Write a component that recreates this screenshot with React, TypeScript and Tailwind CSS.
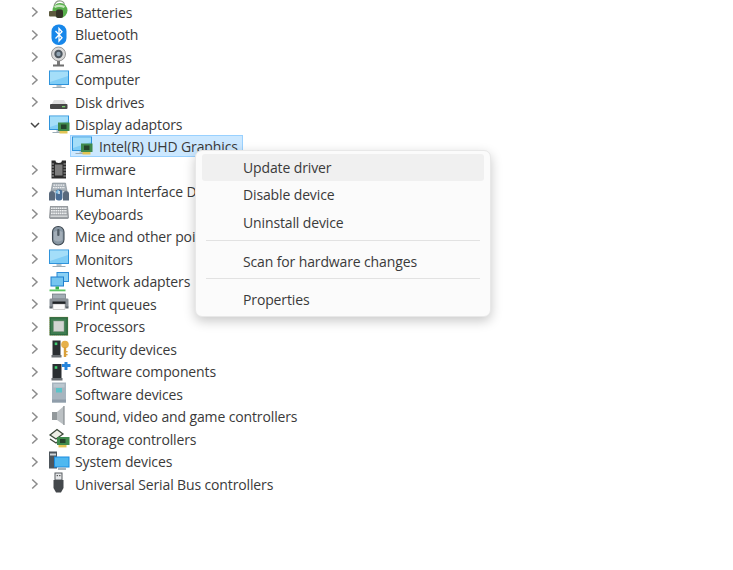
import React from "react";

function Chevron({ open }: { open?: boolean }) {
  return (
    <svg width="12" height="12" viewBox="0 0 12 12" fill="none" strokeWidth="1.5">
      {open ? <path d="M2 4 L6 8 L10 4" stroke="#454545" /> : <path d="M3.2 1.5 L8 6 L3.2 10.5" stroke="#8c8c8c" />}
    </svg>
  );
}

function Monitor() {
  return (
    <g>
      <rect x="0" y="0.5" width="20" height="14.5" fill="#2f94dc" />
      <rect x="1" y="1.5" width="18" height="12.5" fill="#7fcdf6" />
      <path d="M1 1.5 H19 V6 L1 12 Z" fill="#a4def9" />
      <rect x="7.5" y="15" width="5" height="2" fill="#b7c2c9" />
      <rect x="3.5" y="17" width="13" height="1" fill="#9cadb8" />
    </g>
  );
}

function Card() {
  return (
    <g>
      <rect x="9" y="7.5" width="11.5" height="8.5" fill="#3f8a4c" />
      <rect x="12" y="9.5" width="5.5" height="4.5" fill="#24432b" />
      <rect x="10.5" y="16" width="8" height="2.5" fill="#e2c454" />
    </g>
  );
}

function Icon({ name }: { name: string }) {
  let c: React.ReactNode = null;
  switch (name) {
    case "battery":
      c = (<g>
        <path d="M5 5 Q6 -2 12 -1 Q16 0 15 4" fill="none" stroke="#8f9a8a" strokeWidth="1.2" />
        <circle cx="11" cy="8.5" r="7.5" fill="#58b04c" />
        <path d="M5 4 Q10 1 16 4 L15 6 Q10 4 6 6 Z" fill="#c6e6bd" />
        <rect x="0" y="9" width="8" height="5.5" rx="1" fill="#5c5a3e" />
        <rect x="7" y="7.5" width="7" height="8.5" rx="2" fill="#343428" />
      </g>);
      break;
    case "bluetooth":
      c = (<g>
        <rect x="2.5" y="-0.5" width="15" height="20.5" rx="7" fill="#1787ea" />
        <path d="M6.5 6 L13 12.8 L10 16 V3.5 L13 6.8 L6.5 13.5" fill="none" stroke="#fff" strokeWidth="1.3" />
      </g>);
      break;
    case "camera":
      c = (<g>
        <circle cx="9.5" cy="7" r="7" fill="#d8d8d8" stroke="#808080" strokeWidth="0.8" />
        <circle cx="9.5" cy="7" r="4.2" fill="#4c565f" />
        <circle cx="9.5" cy="7" r="2.2" fill="#8fa2b1" />
        <rect x="8" y="14" width="3" height="4" fill="#7a7a7a" />
        <rect x="4" y="17.5" width="11" height="2" fill="#6f6f6f" />
      </g>);
      break;
    case "computer":
    case "monitor":
      c = <Monitor />;
      break;
    case "disk":
      c = (<g>
        <path d="M2.5 12.5 L5 8 H15 L17.5 12.5 Z" fill="#dfdfdf" />
        <rect x="1" y="12" width="17.5" height="5" rx="1" fill="#464646" />
        <rect x="13" y="14" width="3.2" height="1.3" fill="#7bd06e" />
      </g>);
      break;
    case "display":
      c = (<g><Monitor /><Card /></g>);
      break;
    case "firmware":
      c = (<g>
        <path d="M2.5 0.5 H6.5 A3.2 2.5 0 0 0 12.9 0.5 H17 V18.5 H2.5 Z" fill="#2c2c2c" />
        <rect x="6" y="4.5" width="7.5" height="11" fill="#7d7d7d" />
        <path d="M2.5 4 H5 M2.5 7 H5 M2.5 10 H5 M2.5 13 H5 M2.5 16 H5 M14.5 4 H17 M14.5 7 H17 M14.5 10 H17 M14.5 13 H17 M14.5 16 H17" stroke="#c4c4c4" strokeWidth="0.8" />
      </g>);
      break;
    case "hid":
      c = (<g>
        <path d="M3.5 1 H16.5 L18 9 H2 Z" fill="#a8b0b7" stroke="#737d85" strokeWidth="0.5" />
        <path d="M4.5 3.2 H15.5 M4 5.6 H16" stroke="#f0f2f3" strokeWidth="1.2" strokeDasharray="1.6 0.7" />
        <path d="M0 18.5 V12 Q0 9 3 9 Q6 9 6 12 V18.5 Z" fill="#59697c" />
        <path d="M14 18.5 V12 Q14 9 17 9 Q20 9 20 12 V18.5 Z" fill="#59697c" />
        <rect x="6.5" y="7.5" width="7" height="11" rx="3.2" fill="#4a6e96" />
        <path d="M6.5 11 Q8 7 10 8 V12 Z" fill="#7fbde4" />
        <rect x="9.4" y="9" width="1.4" height="3" fill="#dbe3ea" />
      </g>);
      break;
    case "keyboard":
      c = (<g>
        <path d="M1 2 H19 L20 13.5 L19 15 H1 L0 13.5 Z" fill="#989ca0" />
        <path d="M2 4.2 H18 M2 6.8 H18 M2 9.4 H18" stroke="#eef0f1" strokeWidth="1.6" strokeDasharray="1.7 0.5" />
        <rect x="1.5" y="11.5" width="17" height="1.3" fill="#dfe1e3" />
      </g>);
      break;
    case "mouse":
      c = (<g>
        <rect x="3.5" y="-0.5" width="11.5" height="18.5" rx="5.5" fill="#8796a3" stroke="#3f4952" strokeWidth="1.1" />
        <path d="M5 5 Q9 2 13.5 5 V13 Q9 16 5 13 Z" fill="#a3aeb8" />
        <rect x="8.2" y="2" width="2.3" height="7" rx="1" fill="#515c66" />
      </g>);
      break;
    case "network":
      c = (<g>
        <rect x="7.5" y="0" width="12.5" height="10" fill="#2d8bd6" />
        <rect x="8.5" y="1" width="10.5" height="8" fill="#8ad0f4" />
        <rect x="1.5" y="4.5" width="13.5" height="10" fill="#1f7fce" />
        <rect x="2.5" y="5.5" width="11.5" height="8" fill="#75c5f0" />
        <rect x="6.5" y="14.5" width="3.5" height="3" fill="#35b04c" />
        <rect x="0.5" y="17.5" width="16" height="1.8" fill="#5cc565" />
      </g>);
      break;
    case "print":
      c = (<g>
        <rect x="3.5" y="0" width="13" height="5" fill="#a3aeb5" stroke="#59626a" strokeWidth="0.6" />
        <rect x="0.5" y="4.5" width="19" height="9" rx="1.2" fill="#8a9197" />
        <rect x="3.5" y="7.5" width="13" height="2.5" fill="#1f2326" />
        <rect x="4" y="10" width="12" height="5.5" fill="#fbfbfb" stroke="#888" strokeWidth="0.4" />
        <rect x="0.5" y="12.5" width="3" height="2" fill="#5a6268" />
        <rect x="16.5" y="12.5" width="3" height="2" fill="#5a6268" />
      </g>);
      break;
    case "cpu":
      c = (<g>
        <rect x="0.5" y="0" width="18.5" height="18.5" fill="#2d6a42" stroke="#a89b4e" strokeWidth="0.5" strokeDasharray="1 1" />
        <rect x="2" y="1.5" width="15.5" height="15.5" fill="#3f7d50" />
        <rect x="4.5" y="4" width="10.5" height="10.5" fill="#d3d5d2" stroke="#8b9a8c" strokeWidth="0.5" />
      </g>);
      break;
    case "security":
      c = (<g>
        <rect x="3.5" y="1.5" width="8" height="14.5" fill="#2b2f32" />
        <rect x="5.7" y="3.5" width="2.6" height="2.6" fill="#3fcf72" />
        <rect x="2.5" y="16" width="10" height="2.5" fill="#6a6f73" />
        <circle cx="16" cy="5.5" r="3.8" fill="#e6b04a" />
        <rect x="14.8" y="8" width="2.4" height="10" fill="#d9a03a" />
        <rect x="17" y="12" width="1.6" height="1.3" fill="#d9a03a" />
        <rect x="17" y="15" width="1.6" height="1.3" fill="#d9a03a" />
      </g>);
      break;
    case "softcomp":
      c = (<g>
        <rect x="3.5" y="2" width="9" height="14" fill="#2b2f32" />
        <rect x="5.7" y="4.2" width="2.6" height="2.6" fill="#3fcf72" />
        <rect x="2.5" y="16" width="11" height="2.5" fill="#6a6f73" />
        <path d="M13 3.5 H21.5 M17 0 V8" stroke="#2685dc" strokeWidth="3" fill="none" />
      </g>);
      break;
    case "softdev":
      c = (<g>
        <rect x="3" y="-1.5" width="14" height="20" fill="#a8b5bf" />
        <rect x="4.5" y="0" width="11" height="3.5" fill="#bcc8d0" />
        <rect x="7" y="4" width="6" height="4.5" fill="#5cc4c9" />
        <rect x="3" y="15.5" width="14" height="3" fill="#8f9daa" />
      </g>);
      break;
    case "sound":
      c = (<g>
        <rect x="3" y="5" width="5" height="8" fill="#92989b" />
        <path d="M8 5 L15 -1 V18 L8 13 Z" fill="#bcc1c4" />
        <path d="M15 -1 V18" stroke="#868c90" strokeWidth="1.2" />
      </g>);
      break;
    case "storage":
      c = (<g>
        <path d="M1 6 L8 0.5 L14 5 L7 10 Z" fill="#efefe6" stroke="#3e4a3b" strokeWidth="1.3" />
        <path d="M1 10 L7 14 L11 11" fill="none" stroke="#3e4a3b" strokeWidth="1.4" />
        <rect x="8" y="8" width="12.5" height="8" fill="#3f8a4c" />
        <rect x="11" y="10" width="5.5" height="4" fill="#24432b" />
        <rect x="9.5" y="16" width="8" height="2.4" fill="#e2c454" />
      </g>);
      break;
    case "system":
      c = (<g>
        <rect x="0" y="-0.5" width="8" height="17" fill="#4d555b" />
        <rect x="1" y="1.5" width="6" height="2" fill="#d2d6d9" />
        <rect x="5" y="4.5" width="15.5" height="11" fill="#1a8ce0" />
        <rect x="6" y="5.5" width="13.5" height="9" fill="#4fb8f0" />
        <rect x="9" y="15.5" width="8" height="2.5" fill="#a8b4bc" />
      </g>);
      break;
    case "usb":
      c = (<g>
        <rect x="6" y="-1" width="7" height="7" fill="#e4e6e8" stroke="#565b5f" strokeWidth="1" />
        <rect x="7.7" y="1" width="1.2" height="1.2" fill="#444" />
        <rect x="10.2" y="1" width="1.2" height="1.2" fill="#444" />
        <path d="M4.5 6 H14.5 V14 L12 18.5 H7 L4.5 14 Z" fill="#44484c" />
      </g>);
      break;
  }
  return (
    <svg width="20" height="20" viewBox="0 0 20 20" className="shrink-0 overflow-visible">
      {c}
    </svg>
  );
}

const rows: [string, string, boolean?][] = [
  ["Batteries", "battery"],
  ["Bluetooth", "bluetooth"],
  ["Cameras", "camera"],
  ["Computer", "computer"],
  ["Disk drives", "disk"],
  ["Display adaptors", "display", true],
];
const rows2: [string, string][] = [
  ["Firmware", "firmware"],
  ["Human Interface Devices", "hid"],
  ["Keyboards", "keyboard"],
  ["Mice and other pointing devices", "mouse"],
  ["Monitors", "monitor"],
  ["Network adapters", "network"],
  ["Print queues", "print"],
  ["Processors", "cpu"],
  ["Security devices", "security"],
  ["Software components", "softcomp"],
  ["Software devices", "softdev"],
  ["Sound, video and game controllers", "sound"],
  ["Storage controllers", "storage"],
  ["System devices", "system"],
  ["Universal Serial Bus controllers", "usb"],
];

function Row({ label, icon, open }: { label: string; icon: string; open?: boolean }) {
  return (
    <div className="flex items-center h-[22.48px] whitespace-nowrap">
      <span className="w-[12px] ml-[29px] mr-[8px] flex justify-center shrink-0"><Chevron open={open} /></span>
      <Icon name={icon} />
      <span className="ml-[6px]">{label}</span>
    </div>
  );
}

function Item({ label, active }: { label: string; active?: boolean }) {
  return (
    <div className={`h-[27.5px] mx-[6px] pl-[41px] flex items-center rounded-[3px] ${active ? "bg-[#f0f0f0]" : ""}`}>
      {label}
    </div>
  );
}

export default function App() {
  return (
    <div className="relative w-[733px] h-[570px] bg-white overflow-hidden font-['Open_Sans','Noto_Sans',sans-serif] text-[14px] tracking-[-0.13px] text-[#3a3a3a]">
      <div className="pt-[1px]">
        {rows.map(([l, i, o]) => <Row key={l} label={l} icon={i} open={o} />)}
        <div className="flex items-center h-[22.48px] whitespace-nowrap">
          <div className="ml-[70px] mb-[2px] h-[22px] w-[173px] flex items-center bg-[#cce8ff] border border-[#99d1ff]">
            <span className="ml-[1px] flex"><Icon name="display" /></span>
            <span className="ml-[7px] mt-[1px]">Intel(R) UHD Graphics</span>
          </div>
        </div>
        {rows2.map(([l, i]) => <Row key={l} label={l} icon={i} />)}
      </div>
      <div className="absolute left-[195px] top-[149.5px] w-[296px] h-[167px] bg-[#fbfbfb] rounded-[7px] border border-[#e8e8e8] shadow-[0_4px_12px_rgba(0,0,0,0.22)] pt-[3px]">
        <Item label="Update driver" active />
        <Item label="Disable device" />
        <Item label="Uninstall device" />
        <div className="mx-[10px] mt-[3.5px] mb-[7px] h-px bg-[#e2e2e2]" />
        <Item label="Scan for hardware changes" />
        <div className="mx-[10px] mt-[2.5px] mb-[7.5px] h-px bg-[#e2e2e2]" />
        <Item label="Properties" />
      </div>
    </div>
  );
}
